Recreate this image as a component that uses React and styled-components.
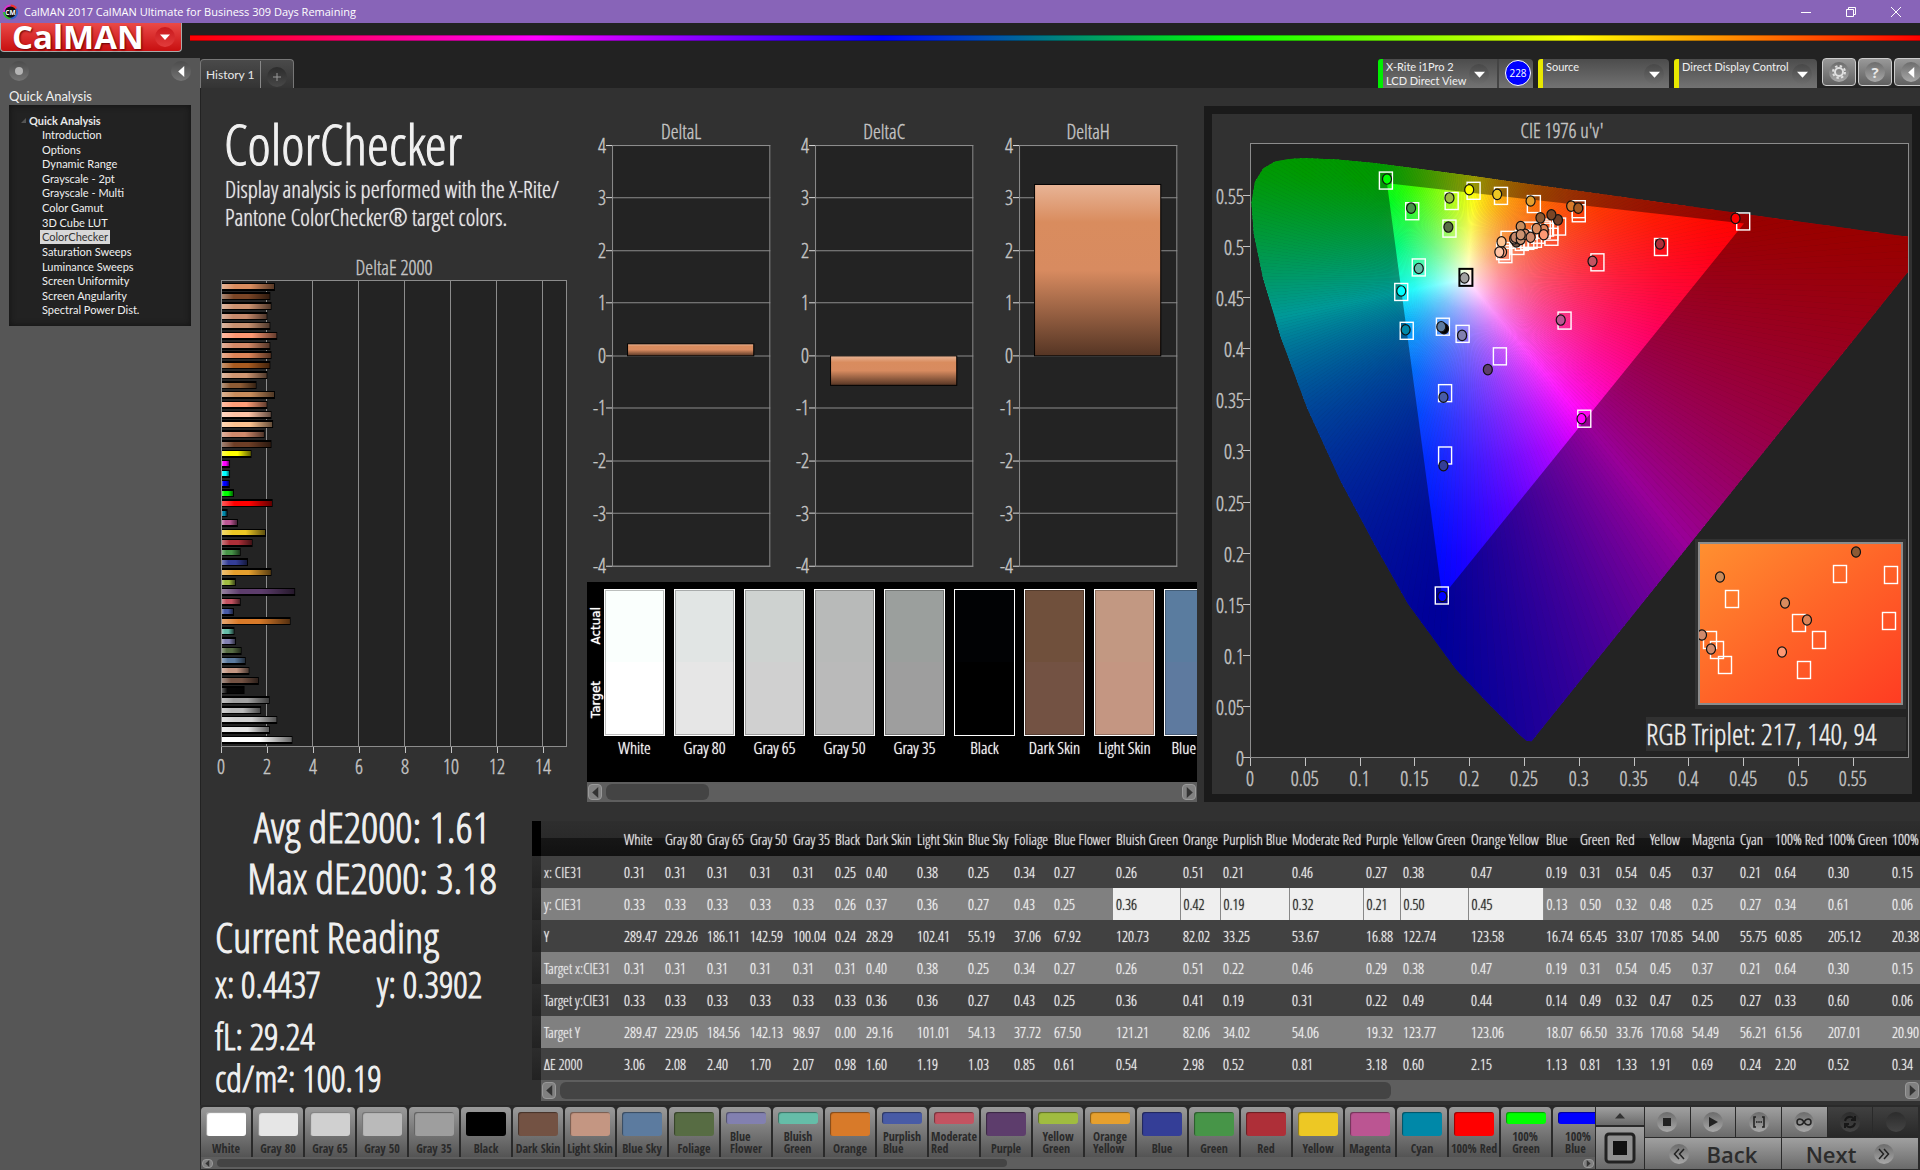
import React from 'react';
import styled, { createGlobalStyle } from 'styled-components';

const narrow = "'Open Sans Condensed Light', 'Open Sans Condensed', sans-serif";
const regular = "'Open Sans', 'Noto Sans', sans-serif";
const small = "Lato, 'Open Sans', sans-serif";

const GlobalStyle = createGlobalStyle`
* { box-sizing: border-box; }
body {
  margin: 0;
  background: #222;
  color: #e8e8e8;
  font-family: ${narrow};
  text-shadow: 0 0 1px currentColor;
  overflow: hidden;
}
button, select { font: inherit; color: inherit; text-shadow: inherit; }
button { cursor: pointer; padding: 0; border: 0; }
svg text {
  font-family: ${narrow};
  font-size: 20px;
  fill: #c4c4c4;
  stroke: #c4c4c4;
  stroke-width: 0.4px;
  text-shadow: none;
}
`;

const Page = styled.div`
display: flex;
flex-direction: column;
height: 100vh;
`;

/* ---------- title bar ---------- */

const TitleBar = styled.div`
display: flex;
align-items: center;
flex: none;
height: 23px;
padding: 0 2px 0 3px;
background: #8864b8;
color: #fff;
font-family: ${regular};
font-size: 11px;
text-shadow: none;
gap: 6px;
`;

const Spacer = styled.div`
flex: 1;
`;

const WindowButtons = styled.div`
display: flex;
`;

const WindowButton = styled.button`
display: flex;
align-items: center;
justify-content: center;
width: 45px;
height: 20px;
background: none;
color: #fff;
`;

/* ---------- logo row ---------- */

const LogoRow = styled.div`
display: flex;
flex: none;
height: 35px;
gap: 8px;
`;

const LogoButton = styled.button`
display: flex;
align-items: center;
justify-content: space-between;
width: 182px;
height: 29px;
padding: 0 6px 0 11px;
background: linear-gradient(#ea4a48, #c80f10);
border: 1px solid #aaa;
border-top: 0;
border-radius: 0 0 4px 4px;
color: #fff;
font-family: ${regular};
font-weight: 700;
font-size: 33px;
line-height: 26px;
text-shadow: 1px 1px 2px #600;
`;

const LogoDisc = styled.span`
display: flex;
align-items: center;
justify-content: center;
width: 20px;
height: 20px;
border-radius: 50%;
background: linear-gradient(#c8181c, #e23c3c);
`;

const Rainbow = styled.div`
flex: 1;
height: 6px;
margin-top: 12px;
border: 1px solid rgba(0, 0, 0, 0.3);
border-width: 1px 0;
background: linear-gradient(90deg, #f00, #f0f 20%, #00f 40%, #0f0 60%, #ff0 80%, #f00);
`;

/* ---------- frame ---------- */

const Frame = styled.div`
display: flex;
flex: 1;
min-height: 0;
`;

const Sidebar = styled.aside`
flex: none;
width: 200px;
padding: 3px 9px 0;
background: #565656;
font-family: ${small};
text-shadow: none;
`;

const SidebarTop = styled.div`
display: flex;
justify-content: space-between;
height: 27px;
`;

const RoundButton = styled.button`
display: flex;
align-items: center;
justify-content: center;
flex: none;
width: 20px;
height: 20px;
border-radius: 50%;
background: ${props => props.$bg || 'linear-gradient(#4c4c4c, #747474)'};
color: #fff;
`;

const SidebarTitle = styled.div`
margin-bottom: 1px;
font-size: 13px;
line-height: 16px;
color: #f0f0f0;
`;

const Tree = styled.div`
height: 221px;
padding: 7px 0 0 12px;
background: #222;
box-shadow: inset 0 0 6px #111;
font-size: 11px;
`;

const TreeRoot = styled.div`
display: flex;
align-items: center;
gap: 3px;
height: 16px;
font-weight: 700;
`;

const TreeList = styled.ul`
display: grid;
grid-auto-rows: 1fr;
height: 190px;
margin: 0;
padding: 0 0 0 19px;
line-height: 14px;
list-style: none;
`;

const TreeLink = styled.a`
display: inline-block;
padding: 0 2px;
color: ${props => (props.$active ? '#333' : '#f0f0f0')};
background: ${props => (props.$active ? '#d8d8d8' : 'none')};
text-decoration: none;
`;

const Main = styled.main`
display: flex;
flex-direction: column;
flex: 1;
min-width: 0;
overflow: hidden;
`;

const TabRow = styled.div`
display: flex;
align-items: flex-start;
flex: none;
height: 30px;
margin-right: -10px;
background: #222;
font-family: ${small};
text-shadow: none;
`;

const Tab = styled.div`
display: flex;
align-items: center;
height: 30px;
margin-top: 1px;
border: 1px solid #777;
border-bottom: 0;
border-radius: 4px 4px 0 0;
background: linear-gradient(#4a4a4a, #333);
`;

const TabButton = styled.button`
height: 28px;
padding: 0 5px;
border-right: 1px solid #888;
background: none;
font-size: 12px;
`;

const AddTab = styled.div`
display: flex;
padding: 4px 6px 0;
`;

const Device = styled.div`
display: flex;
height: 30px;
margin: 1px 5px 0 0;
border-left: 5px solid ${props => props.$mark};
border-radius: 3px 4px 0 0;
background: linear-gradient(#4c4c4c, #747474);
color: #f0f0f0;
font-size: 11px;
`;

const DeviceButton = styled.button`
display: flex;
justify-content: space-between;
align-items: center;
width: 116px;
padding: 0 8px 0 3px;
background: none;
border-right: 2px solid #444;
text-align: left;
line-height: 14px;
white-space: nowrap;
`;

const DeviceSelect = styled.select`
appearance: none;
width: ${props => props.$wide}px;
height: 16px;
padding: 0 0 0 3px;
border: 0;
background: none;
line-height: 16px;
`;

const DeviceArrow = styled.div`
display: flex;
align-items: center;
padding-right: 5px;
`;

const Meter = styled.div`
display: flex;
align-items: center;
justify-content: center;
width: 26px;
height: 26px;
margin: 1px 2px 0 6px;
border: 1px solid #fff;
border-radius: 50%;
background: #00f;
font-family: ${regular};
font-size: 10px;
color: #fff;
`;

const ToolButton = styled.button`
display: flex;
align-items: center;
justify-content: center;
width: 34px;
height: 28px;
margin-right: 2px;
border: 1px solid #ccc;
border-radius: 4px;
background: linear-gradient(#999, #606060);
font-family: ${regular};
font-weight: 700;
font-size: 15px;
`;

/* ---------- workspace ---------- */

const Workspace = styled.div`
display: flex;
flex-direction: column;
flex: 1;
min-height: 0;
background: #313131;
border-left: 1px solid #222;
`;

const Charts = styled.div`
display: grid;
grid-template-columns: minmax(0, 386fr) minmax(0, 617fr) minmax(0, 716fr);
flex: none;
min-height: 715px;
`;

const Intro = styled.section`
padding-top: 25px;
`;

const Heading = styled.h1`
margin: 0 0 2px 23px;
font-weight: 400;
font-size: 56px;
line-height: 60px;
color: #f0f0f0;
text-shadow: none;
-webkit-text-stroke: 1px;
`;

const Lead = styled.p`
margin: 0 0 19px 24px;
font-size: 23px;
line-height: 28px;
white-space: nowrap;
`;

const Chart = styled.svg`
display: block;
width: 100%;
height: auto;
`;

const Middle = styled.section`
padding: 30px 7px 0 0;
`;

const Deltas = styled.div`
display: grid;
grid-template-columns: repeat(3, minmax(0, 1fr));
height: 464px;
`;

const SwatchPanel = styled.div`
display: flex;
height: 200px;
padding-top: 7px;
background: #000;
overflow: hidden;
`;

const SwatchSide = styled.div`
display: flex;
flex-direction: column-reverse;
justify-content: space-around;
align-items: center;
flex: none;
width: 17px;
height: 147px;
font-family: 'DejaVu Sans', sans-serif;
font-size: 12px;
color: #fff;
span {
  writing-mode: vertical-rl;
  rotate: 180deg;
}
`;

const Swatch = styled.div`
flex: none;
width: 61px;
margin-right: 9px;
text-align: center;
font-size: 17px;
line-height: 24px;
color: #fff;
white-space: nowrap;
`;

const SwatchColor = styled.div`
height: 147px;
border: 1px solid #fff;
box-shadow: inset 0 0 0 1px rgba(0, 0, 0, 0.25);
background: linear-gradient(${props => props.$actual} 50%, ${props => props.$target} 50%);
`;

const Scroll = styled.div`
display: flex;
align-items: center;
gap: 4px;
flex: none;
height: ${props => props.$size}px;
padding: 1px;
background: #5e5e5e;
`;

const ScrollButton = styled.button`
display: flex;
align-items: center;
justify-content: center;
flex: none;
width: ${props => (props.$small ? 11 : 14)}px;
height: 90%;
border: 1px solid #999;
border-radius: 4px;
background: #808080;
`;

const ScrollTrack = styled.div`
flex: 1;
height: 86%;
`;

const ScrollThumb = styled.div`
width: ${props => props.$portion};
height: 100%;
border-radius: 6px;
background: #444;
`;

const CiePanel = styled.section`
align-self: start;
margin-top: 18px;
border: 8px solid #1a1a1a;
background: #313131;
`;

const Lower = styled.div`
display: flex;
flex: 1;
min-height: 0;
`;

const Stats = styled.section`
flex: none;
width: 331px;
margin-top: -2px;
padding-left: 14px;
font-size: 36px;
line-height: 42px;
color: #f0f0f0;
text-shadow: none;
-webkit-text-stroke: 1px;
white-space: nowrap;
`;

const BigStat = styled.div`
margin-right: 3px;
text-align: center;
font-size: 43px;
line-height: 51px;
`;

const StatHeading = styled.div`
margin-top: 8px;
font-size: 43px;
line-height: 51px;
`;

const StatPair = styled.div`
display: grid;
grid-template-columns: 162px 1fr;
line-height: 46px;
margin-bottom: 8px;
`;

const Results = styled.section`
flex: 1;
min-width: 0;
padding-top: 18px;
`;

const TableClip = styled.div`
overflow: hidden;
`;

const ScrollIndent = styled.div`
margin-left: 9px;
`;

const Table = styled.table`
table-layout: fixed;
width: 1439px;
border-collapse: collapse;
font-size: 15px;
white-space: nowrap;
th, td {
  padding: 0 0 0 3px;
  font-weight: 400;
  text-align: left;
}
thead tr {
  height: 35px;
  background: linear-gradient(#2e2e2e, #2a2a2a 50%, #161616 50%, #111);
}
tbody tr {
  height: 32px;
  background: #414141;
}
tbody tr:nth-child(even) {
  background: #808080;
}
thead td:first-child {
  background: #000;
}
tbody td:first-child {
  background: linear-gradient(#2c2c2c, #222);
}
`;

const Cell = styled.td`
color: ${props => (props.$on ? '#222' : '#f0f0f0')};
background: ${props => (props.$on ? '#efefef' : 'none')};
border-right: ${props => (props.$on ? '1px solid #888' : '0')};
`;

/* ---------- bottom bar ---------- */

const BottomBar = styled.div`
display: flex;
flex: none;
height: 65px;
padding: 2px 2px 1px 1px;
gap: 1px;
background: #2a2a2a;
text-shadow: none;
`;

const Patches = styled.div`
flex: 1;
min-width: 0;
`;

const PatchRow = styled.div`
display: flex;
gap: 2px;
height: 50px;
overflow: hidden;
`;

const Patch = styled.button`
display: flex;
flex-direction: column;
justify-content: space-between;
align-items: center;
flex: none;
width: 50px;
height: 50px;
padding: 5px 0 2px;
border-radius: 4px 4px 0 0;
background: linear-gradient(#9a9a9a, #545454);
color: #2a2a2a;
font-family: 'Open Sans Condensed', sans-serif;
font-weight: 700;
font-size: 12px;
line-height: 12px;
text-align: left;
white-space: pre;
`;

const PatchColor = styled.span`
width: 40px;
height: ${props => (props.$short ? 12 : 24)}px;
border-radius: 3px;
box-shadow: inset 1px 1px 1px rgba(0, 0, 0, 0.4);
background: ${props => props.$color};
`;

const Stack = styled.div`
display: grid;
grid-template-rows: 18px 1fr;
gap: 2px;
width: 48px;
`;

const Controls = styled.div`
display: grid;
grid-template-rows: 30px 1fr;
gap: 1px;
width: 273px;
`;

const ControlRow = styled.div`
display: flex;
gap: 1px;
`;

const Control = styled.button`
display: flex;
align-items: center;
justify-content: center;
gap: 18px;
flex: 1;
background: ${props => (props.$dark ? 'linear-gradient(#404040, #282828)' : 'linear-gradient(#a0a0a0, #6a6a6a)')};
color: #2c2c2c;
font-family: ${regular};
font-weight: 600;
font-size: 22px;
line-height: 28px;
`;

/* ---------- data ---------- */

const sections = ['Introduction', 'Options', 'Dynamic Range', 'Grayscale - 2pt', 'Grayscale - Multi',
  'Color Gamut', '3D Cube LUT', 'ColorChecker', 'Saturation Sweeps', 'Luminance Sweeps',
  'Screen Uniformity', 'Screen Angularity', 'Spectral Power Dist.'];

const deltaE = [
  [2.3, '#d98c5e'], [2.1, '#7a4526'], [2.15, '#cd9270'], [1.97, '#c88a6c'], [2.1, '#c79070'],
  [2.4, '#ff9873'], [2.1, '#d48866'], [2.15, '#dd8458'], [2.1, '#a85a20'], [1.97, '#d09672'],
  [1.5, '#8c5a34'], [2.3, '#c88c5c'], [1.97, '#ff9e78'], [2.15, '#ffc4a6'], [2.22, '#ffc491'],
  [1.85, '#d08a6c'], [2.15, '#6e3e26'], [1.28, '#ffff00'], [0.35, '#ff00ff'], [0.35, '#00ffff'],
  [0.34, '#0000ff'], [0.52, '#00ff00'], [2.2, '#ff0000'], [0.24, '#0088a8'], [0.69, '#bb5592'],
  [1.91, '#edc824'], [1.33, '#ae2f38'], [0.81, '#479548'], [1.13, '#343e97'], [2.15, '#e6a02e'],
  [0.6, '#a0bc40'], [3.18, '#5d3d6c'], [0.81, '#c35361'], [0.52, '#485ba6'], [2.98, '#d87a29'],
  [0.54, '#65bda8'], [0.61, '#8280b0'], [0.85, '#576c43'], [1.03, '#5c7b9f'], [1.19, '#c49682'],
  [1.6, '#735243'], [0.98, '#050505'], [2.07, '#a0a0a0'], [1.7, '#bababa'], [2.4, '#d0d0d0'],
  [2.08, '#e6e6e6'], [3.06, '#ffffff'],
];

const swatches = [
  ['White', '#fafffd', '#ffffff'], ['Gray 80', '#e1e5e4', '#e6e6e6'], ['Gray 65', '#ced2d0', '#d0d0d0'],
  ['Gray 50', '#b8bab9', '#bababa'], ['Gray 35', '#9b9f9d', '#9e9e9e'], ['Black', '#010204', '#000000'],
  ['Dark Skin', '#70503c', '#735243'], ['Light Skin', '#c29882', '#c49682'], ['Blue Sky', '#5a7c9f', '#5e7a9f'],
];

const patches = [
  ['White', '#ffffff'], ['Gray 80', '#e6e6e6'], ['Gray 65', '#d0d0d0'], ['Gray 50', '#bababa'],
  ['Gray 35', '#9e9e9e'], ['Black', '#000000'], ['Dark Skin', '#735243'], ['Light Skin', '#c49682'],
  ['Blue Sky', '#5c7b9f'], ['Foliage', '#576c43'], ['Blue\nFlower', '#8280b0'], ['Bluish\nGreen', '#65bda8'],
  ['Orange', '#d87a29'], ['Purplish\nBlue', '#485ba6'], ['Moderate\nRed', '#c35361'], ['Purple', '#5d3d6c'],
  ['Yellow\nGreen', '#a0bc40'], ['Orange\nYellow', '#e6a02e'], ['Blue', '#343e97'], ['Green', '#479548'],
  ['Red', '#ae2f38'], ['Yellow', '#edc824'], ['Magenta', '#bb5592'], ['Cyan', '#0088a8'],
  ['100% Red', '#ff0000'], ['100%\nGreen', '#00ff00'], ['100%\nBlue', '#0000ff'],
];

const columns = [
  ['White', 41], ['Gray 80', 42], ['Gray 65', 43], ['Gray 50', 43], ['Gray 35', 42], ['Black', 31],
  ['Dark Skin', 51], ['Light Skin', 51], ['Blue Sky', 46], ['Foliage', 40], ['Blue Flower', 62],
  ['Bluish Green', 67], ['Orange', 40], ['Purplish Blue', 69], ['Moderate Red', 74], ['Purple', 37],
  ['Yellow Green', 68], ['Orange Yellow', 75], ['Blue', 34], ['Green', 36], ['Red', 34], ['Yellow', 42],
  ['Magenta', 48], ['Cyan', 35], ['100% Red', 53], ['100% Green', 64], ['100% Blue', 82],
];

const rows = [
  ['x: CIE31', '0.31 0.31 0.31 0.31 0.31 0.25 0.40 0.38 0.25 0.34 0.27 0.26 0.51 0.21 0.46 0.27 0.38 0.47 0.19 0.31 0.54 0.45 0.37 0.21 0.64 0.30 0.15'],
  ['y: CIE31', '0.33 0.33 0.33 0.33 0.33 0.26 0.37 0.36 0.27 0.43 0.25 0.36 0.42 0.19 0.32 0.21 0.50 0.45 0.13 0.50 0.32 0.48 0.25 0.27 0.34 0.61 0.06'],
  ['Y', '289.47 229.26 186.11 142.59 100.04 0.24 28.29 102.41 55.19 37.06 67.92 120.73 82.02 33.25 53.67 16.88 122.74 123.58 16.74 65.45 33.07 170.85 54.00 55.75 60.85 205.12 20.38'],
  ['Target x:CIE31', '0.31 0.31 0.31 0.31 0.31 0.31 0.40 0.38 0.25 0.34 0.27 0.26 0.51 0.22 0.46 0.29 0.38 0.47 0.19 0.31 0.54 0.45 0.37 0.21 0.64 0.30 0.15'],
  ['Target y:CIE31', '0.33 0.33 0.33 0.33 0.33 0.33 0.36 0.36 0.27 0.43 0.25 0.36 0.41 0.19 0.31 0.22 0.49 0.44 0.14 0.49 0.32 0.47 0.25 0.27 0.33 0.60 0.06'],
  ['Target Y', '289.47 229.05 184.56 142.13 98.97 0.00 29.16 101.01 54.13 37.72 67.50 121.21 82.06 34.02 54.06 19.32 123.77 123.06 18.07 66.50 33.76 170.68 54.49 56.21 61.56 207.01 20.90'],
  ['ΔE 2000', '3.06 2.08 2.40 1.70 2.07 0.98 1.60 1.19 1.03 0.85 0.61 0.54 2.98 0.52 0.81 3.18 0.60 2.15 1.13 0.81 1.33 1.91 0.69 0.24 2.20 0.52 0.34'],
];

// spectral locus in u'v'
const locus = [[0.2569, 0.0165], [0.2522, 0.0169], [0.2461, 0.0226], [0.2347, 0.035], [0.2161, 0.0549],
  [0.1877, 0.0871], [0.1441, 0.151], [0.1147, 0.207], [0.0828, 0.2708], [0.0521, 0.3427], [0.0282, 0.4117], [0.0119, 0.4698],
  [0.0035, 0.5131], [0.0014, 0.5432], [0.0046, 0.5638], [0.0123, 0.577], [0.0231, 0.5837], [0.036, 0.5861],
  [0.0501, 0.5868], [0.0792, 0.5856], [0.1127, 0.5821], [0.1531, 0.5766], [0.2026, 0.5694],
  [0.2623, 0.5604], [0.3315, 0.5501], [0.4035, 0.5393], [0.4692, 0.5296], [0.5203, 0.5219],
  [0.583, 0.5125], [0.6234, 0.5065]];

const gamut = [[0.4507, 0.5229], [0.125, 0.5625], [0.1754, 0.1579]];
const white = [0.1978, 0.4683];

const targets = [
  [0.124, 0.565], [0.148, 0.535], [0.184, 0.545], [0.182, 0.518], [0.204, 0.555], [0.229, 0.55],
  [0.259, 0.542], [0.3, 0.537], [0.3, 0.533], [0.45, 0.525], [0.375, 0.5], [0.317, 0.485],
  [0.154, 0.48], [0.138, 0.456], [0.143, 0.418], [0.176, 0.422], [0.194, 0.415], [0.228, 0.393],
  [0.178, 0.357], [0.178, 0.296], [0.305, 0.332], [0.287, 0.428], [0.175, 0.159],
  [0.233, 0.493], [0.231, 0.496], [0.235, 0.507], [0.244, 0.501], [0.248, 0.505], [0.253, 0.506],
  [0.256, 0.507], [0.26, 0.508], [0.256, 0.516], [0.268, 0.517], [0.275, 0.51], [0.282, 0.52],
  [0.275, 0.515], [0.271, 0.519], [0.248, 0.508], [0.263, 0.512],
];

const readings = [
  [0.125, 0.5665, '#00ff00'], [0.147, 0.538, '#479548'], [0.182, 0.548, '#a0bc40'], [0.181, 0.5195, '#576c43'],
  [0.2, 0.556, '#ffff00'], [0.2255, 0.5515, '#edc824'], [0.256, 0.545, '#e6a02e'], [0.293, 0.54, '#d87a29'],
  [0.2995, 0.538, '#a85a20'], [0.443, 0.528, '#ff0000'], [0.374, 0.503, '#ae2f38'], [0.3125, 0.486, '#c35361'],
  [0.154, 0.479, '#65bda8'], [0.138, 0.457, '#00ffff'], [0.142, 0.419, '#0088a8'], [0.177, 0.42, '#000000'],
  [0.1745, 0.422, '#5c7b9f'], [0.1935, 0.4135, '#8280b0'], [0.217, 0.38, '#5d3d6c'], [0.1765, 0.353, '#485ba6'],
  [0.1765, 0.286, '#343e97'], [0.3025, 0.332, '#ff00ff'], [0.2835, 0.4285, '#bb5592'], [0.1755, 0.158, '#0000ff'],
  [0.281, 0.5265, '#6e3e26'], [0.275, 0.5315, '#7a4526'], [0.265, 0.5285, '#8c5a34'], [0.247, 0.52, '#c88c5c'],
  [0.268, 0.517, '#dd8458'], [0.2615, 0.518, '#d98c5e'], [0.268, 0.512, '#ff9873'], [0.2295, 0.505, '#ffc491'],
  [0.23, 0.495, '#ff9e78'], [0.2275, 0.495, '#ffc4a6'], [0.243, 0.505, '#735243'], [0.241, 0.508, '#c49682'],
  [0.242, 0.5095, '#c88a6c'], [0.247, 0.5075, '#c79070'], [0.251, 0.5125, '#d48866'], [0.247, 0.512, '#cd9270'],
  [0.256, 0.5095, '#d08a6c'],
];

const insetTargets = [[142, 32], [193, 33], [34, 57], [101, 81], [191, 79], [121, 98], [12, 98], [19, 108], [27, 123], [106, 128]];
const insetReadings = [[158, 10, '#8c5a34'], [22, 35, '#c88c5c'], [87, 61, '#d98c5e'], [109, 78, '#dd8458'],
  [84, 110, '#ff9873'], [4, 93, '#d08a6c'], [13, 107, '#d08a6c']];

/* ---------- CIE helpers ---------- */

const toX = u => 38 + u * 1096;
const toY = v => 644 - v * 1022;
const toPoint = ([u, v]) => `${toX(u)},${toY(v)}`;

const colorAt = (u, v) => {
  const X = (9 * u) / (4 * v);
  const Z = (12 - 3 * u - 20 * v) / (4 * v);
  const linear = [
    3.2406 * X - 1.5372 - 0.4986 * Z,
    -0.9689 * X + 1.8758 + 0.0415 * Z,
    0.0557 * X - 0.204 + 1.057 * Z,
  ].map(c => Math.max(0, c));
  const top = Math.max(...linear);
  return `rgb(${linear.map(c => Math.round(255 * c / top)).join(',')})`;
};

const rayCount = 360;
const reach = 0.6;
const stops = [0, 0.02, 0.05, 0.08, 0.12, 0.17, 0.23, 0.3, 0.38, 0.45, 0.55, 0.7, 0.85, 1];
const rays = Array.from({ length: rayCount }, (_, i) => {
  const step = (2 * Math.PI) / rayCount;
  const at = (angle, r) => [white[0] + Math.cos(angle) * r, white[1] + Math.sin(angle) * r];
  const mid = (i + 0.5) * step;
  return {
    id: `ray${i}`,
    end: at(mid, reach),
    points: [white, at(i * step, reach * 1.1), at((i + 1) * step, reach * 1.1)].map(toPoint).join(' '),
    stops: stops.map((t) => {
      const [u, v] = at(mid, reach * t);
      return [t, colorAt(u, Math.max(v, 0.008))];
    }),
  };
});

/* ---------- components ---------- */

const Triangle = ({ dir = 'down', size = 10, color = '#fff' }) => {
  const turn = { down: 0, left: 90, up: 180, right: 270 }[dir];
  return (
    <svg width={size} height={size} viewBox="0 0 10 10" aria-hidden="true">
      <path d="M0 2.5h10L5 8z" fill={color} transform={`rotate(${turn} 5 5)`} />
    </svg>
  );
};

const Knob = styled.span`
display: flex;
align-items: center;
justify-content: center;
flex: none;
width: 20px;
height: 20px;
border-radius: 50%;
background: linear-gradient(#484848, #6c6c6c);
`;

const Scrollbar = ({ size, portion, label }) => (
  <Scroll $size={size}>
    <ScrollButton $small={size < 15} aria-label={`${label} left`}><Triangle dir="left" size={size < 15 ? 7 : 11} color="#333" /></ScrollButton>
    <ScrollTrack><ScrollThumb $portion={portion} /></ScrollTrack>
    <ScrollButton $small={size < 15} aria-label={`${label} right`}><Triangle dir="right" size={size < 15 ? 7 : 11} color="#333" /></ScrollButton>
  </Scroll>
);

const DeltaEChart = () => (
  <Chart viewBox="0 0 386 540" role="img" aria-label="DeltaE 2000">
    <defs>
      <linearGradient id="shade">
        <stop offset="0" stopColor="#fff" stopOpacity="0.35" />
        <stop offset="0.25" stopColor="#fff" stopOpacity="0" />
        <stop offset="0.55" stopColor="#000" stopOpacity="0" />
        <stop offset="1" stopColor="#000" stopOpacity="0.6" />
      </linearGradient>
    </defs>
    <text x="193" y="25" textAnchor="middle">DeltaE 2000</text>
    <rect x="20" y="31" width="345" height="465" fill="#232323" />
    {[2, 4, 6, 8, 10, 12, 14].map(n => (
      <path key={n} d={`M${19.5 + n * 23} 31v465`} stroke="#8c8c8c" />
    ))}
    {[0, 2, 4, 6, 8, 10, 12, 14].map(n => (
      <g key={n}>
        <path d={`M${20.5 + n * 23} 496v7`} stroke="#c4c4c4" />
        <text x={20 + n * 23} y="524" textAnchor="middle">{n}</text>
      </g>
    ))}
    {deltaE.map(([value, color], i) => (
      <g key={i}>
        <rect x="20" y={Math.round(32.5 + i * 9.85)} width={value * 23 + 1} height="8" fill="#000" />
        <rect x="21" y={Math.round(34 + i * 9.85)} width={value * 23 - 1} height="5" fill={color} />
        <rect x="21" y={Math.round(34 + i * 9.85)} width={value * 23 - 1} height="5" fill="url(#shade)" />
      </g>
    ))}
    <rect x="20.5" y="30.5" width="345" height="466" fill="none" stroke="#8c8c8c" />
  </Chart>
);

const DeltaChart = ({ name, value }) => {
  const zero = 237.5;
  const height = Math.abs(value) * 52.5;
  return (
    <Chart viewBox="0 0 203 464" role="img" aria-label={name}>
      <defs>
        <linearGradient id="bar" x2="0" y2="1">
          <stop offset="0" stopColor="#e8b496" />
          <stop offset="0.22" stopColor="#d98c5e" />
          <stop offset="0.5" stopColor="#d88b60" />
          <stop offset="1" stopColor="#553524" />
        </linearGradient>
      </defs>
      <text x="94" y="21" textAnchor="middle">{name}</text>
      <rect x="25.5" y="27.5" width="157" height="420" fill="#232323" stroke="#8c8c8c" />
      {[4, 3, 2, 1, 0, -1, -2, -3, -4].map(n => (
        <g key={n}>
          <path d={`M25 ${Math.round(zero - n * 52.5) - 0.5}h158`} stroke="#8c8c8c" />
          <path d={`M19 ${Math.round(zero - n * 52.5) - 0.5}h6`} stroke="#ddd" />
          <text x="19" y={zero + 7 - n * 52.5} textAnchor="end">{n}</text>
        </g>
      ))}
      <rect
        x="40.5"
        y={value > 0 ? zero - height : zero}
        width="126"
        height={height}
        fill="url(#bar)"
        stroke="#000"
      />
    </Chart>
  );
};

const Target = ({ x, y, dark }) => (
  <rect x={x - 6.5} y={y - 8.5} width="13" height="17" fill="none" stroke={dark ? '#000' : '#fff'} strokeWidth={dark ? 2 : 1.4} />
);

const Reading = ({ x, y, color }) => (
  <ellipse cx={x} cy={y} rx="4.5" ry="5.2" fill={color} stroke="#111" strokeWidth="1.2" />
);

const TripletText = styled.text`
&& {
  font-size: 29px;
  fill: #f0f0f0;
  stroke: #f0f0f0;
}
`;

const IconText = styled.text`
&& {
  font-family: ${regular};
  font-size: 7px;
  font-weight: 700;
  fill: #fff;
  stroke: none;
}
`;

const CieChart = () => (
  <Chart viewBox="0 0 700 680" role="img" aria-label="CIE 1976 u'v'">
    <defs>
      <clipPath id="plot"><rect x="38" y="30" width="658" height="614" /></clipPath>
      <clipPath id="locus"><polygon points={locus.map(toPoint).join(' ')} /></clipPath>
      {rays.map(ray => (
        <linearGradient
          key={ray.id}
          id={ray.id}
          gradientUnits="userSpaceOnUse"
          x1={toX(white[0])}
          y1={toY(white[1])}
          x2={toX(ray.end[0])}
          y2={toY(ray.end[1])}
        >
          {ray.stops.map(([t, color]) => <stop key={t} offset={t} stopColor={color} />)}
        </linearGradient>
      ))}
      <linearGradient id="inset" x2="1" y2="1">
        <stop offset="0" stopColor="#ff9030" />
        <stop offset="0.5" stopColor="#ff6428" />
        <stop offset="1" stopColor="#ff3c22" />
      </linearGradient>
      <clipPath id="insetClip"><rect x="487" y="429" width="203" height="161" /></clipPath>
    </defs>
    <text x="350" y="24" textAnchor="middle">CIE 1976 u&#39;v&#39;</text>
    <rect x="38" y="30" width="658" height="614" fill="#232323" />
    <g clipPath="url(#plot)">
      <g clipPath="url(#locus)">
        {rays.map(ray => (
          <polygon key={ray.id} points={ray.points} fill={`url(#${ray.id})`} stroke={`url(#${ray.id})`} strokeWidth="0.7" />
        ))}
        <path d={`M0 0H760V700H0ZM${gamut.map(toPoint).join('L')}Z`} fillRule="evenodd" opacity="0.4" />
      </g>
      {targets.map(([u, v], i) => <Target key={i} x={toX(u)} y={toY(v)} />)}
      <Target x={toX(0.197)} y={toY(0.4703)} dark />
      {readings.map(([u, v, color], i) => <Reading key={i} x={toX(u)} y={toY(v)} color={color} />)}
      <Reading x={toX(0.1957)} y={toY(0.4697)} color="#a0a0a0" />
    </g>
    <rect x="38.5" y="29.5" width="658" height="614" fill="none" stroke="#8c8c8c" />
    {[0, 0.05, 0.1, 0.15, 0.2, 0.25, 0.3, 0.35, 0.4, 0.45, 0.5, 0.55].map(n => (
      <g key={n}>
        <path d={`M${Math.round(toX(n)) + 0.5} 644v8M31 ${Math.round(toY(n)) - 0.5}h7`} stroke="#c4c4c4" />
        <text x={toX(n)} y="672" textAnchor="middle">{n}</text>
        <text x="32" y={toY(n) + 8} textAnchor="end">{n}</text>
      </g>
    ))}
    <rect x="483" y="425" width="211" height="170" fill="#313131" />
    <rect x="487" y="429" width="203" height="161" fill="url(#inset)" stroke="#8c8c8c" strokeWidth="2" />
    <g clipPath="url(#insetClip)">
      <g transform="translate(486 428)">
        {insetTargets.map(([x, y], i) => <Target key={i} x={x} y={y} />)}
        {insetReadings.map(([x, y, color], i) => <Reading key={i} x={x} y={y} color={color} />)}
      </g>
    </g>
    <rect x="434" y="603" width="260" height="34" fill="#313131" />
    <TripletText x="434" y="631">RGB Triplet: 217, 140, 94</TripletText>
  </Chart>
);

const DataTable = () => (
  <Table>
    <colgroup>
      <col style={{ width: 9 }} />
      <col style={{ width: 80 }} />
      {columns.map(([name, width]) => <col key={name} style={{ width }} />)}
    </colgroup>
    <thead>
      <tr>
        <td />
        <td />
        {columns.map(([name]) => <th key={name} scope="col">{name}</th>)}
      </tr>
    </thead>
    <tbody>
      {rows.map(([label, values], r) => (
        <tr key={label}>
          <td />
          <th scope="row">{label}</th>
          {values.split(' ').map((value, c) => (
            <Cell key={c} $on={r === 1 && c > 10 && c < 18}>{value}</Cell>
          ))}
        </tr>
      ))}
    </tbody>
  </Table>
);

const Disc = styled.span`
display: flex;
align-items: center;
justify-content: center;
flex: none;
width: 20px;
height: 20px;
border-radius: 50%;
background: ${props => (props.$dark ? 'linear-gradient(#2c2c2c, #444)' : 'linear-gradient(#6c6c6c, #a8a8a8)')};
`;

const icons = [
  ['Stop', <rect x="5" y="5" width="8" height="8" fill="#222" />],
  ['Play', <path d="M5 4l9 5-9 5z" fill="#222" />],
  ['Read series', <path d="M6 4H4v10h2M12 4h2v10h-2M6 9h1.600M8.200 9h1.600M10.400 9h1.600" fill="none" stroke="#222" strokeWidth="1.6" />],
  ['Continuous', <path d="M9 9C7.500 6.500 6.500 6 5 6a3 3 0 0 0 0 6c1.500 0 2.500-.5 4-3s2.500-3 4-3a3 3 0 0 1 0 6c-1.500 0-2.500-.5-4-3z" fill="none" stroke="#222" strokeWidth="1.5" />],
  ['Refresh', <path d="M4 8a5 5 0 0 1 9-2M14 3v4h-4M14 10a5 5 0 0 1-9 2M4 15v-4h4" fill="none" stroke="#181818" strokeWidth="2" />, true],
  ['Record', null, true],
];

const App = () => (
  <Page>
    <GlobalStyle />
    <TitleBar>
      <svg width="15" height="16" viewBox="0 0 16 16" aria-hidden="true">
        <path d="M8 8L8 0A8 8 0 0 1 15 4z" fill="#e33" />
        <path d="M8 8L15 4A8 8 0 0 1 8 16z" fill="#36c" />
        <path d="M8 8L8 16A8 8 0 0 1 0 8z" fill="#3b3" />
        <path d="M8 8L0 8A8 8 0 0 1 8 0z" fill="#d3c" />
        <circle cx="8" cy="8" r="6" fill="#111" />
        <IconText x="8" y="11" textAnchor="middle">CM</IconText>
      </svg>
      <span>CalMAN 2017 CalMAN Ultimate for Business 309 Days Remaining</span>
      <Spacer />
      <WindowButtons>
        <WindowButton aria-label="Minimize">
          <svg width="10" height="10" viewBox="0 0 10 10"><path d="M0 5.500h10" stroke="#fff" /></svg>
        </WindowButton>
        <WindowButton aria-label="Restore">
          <svg width="10" height="10" viewBox="0 0 10 10" fill="none" stroke="#fff"><path d="M.5 2.500h7v7h-7zM2.500 2.500v-2h7v7h-2" /></svg>
        </WindowButton>
        <WindowButton aria-label="Close">
          <svg width="10" height="10" viewBox="0 0 10 10" stroke="#fff"><path d="M0 0l10 10M10 0L0 10" /></svg>
        </WindowButton>
      </WindowButtons>
    </TitleBar>
    <LogoRow>
      <LogoButton>
        CalMAN
        <LogoDisc><Triangle /></LogoDisc>
      </LogoButton>
      <Rainbow />
    </LogoRow>
    <Frame>
      <Sidebar>
        <SidebarTop>
          <RoundButton aria-label="Status">
            <svg width="8" height="8" viewBox="0 0 8 8"><circle cx="4" cy="4" r="4" fill="#b4b4b4" /></svg>
          </RoundButton>
          <RoundButton aria-label="Collapse"><Triangle dir="left" size={11} /></RoundButton>
        </SidebarTop>
        <SidebarTitle>Quick Analysis</SidebarTitle>
        <Tree>
          <TreeRoot>
            <svg width="5" height="5" viewBox="0 0 5 5" aria-hidden="true"><path d="M5 0v5H0z" fill="#555" /></svg>
            Quick Analysis
          </TreeRoot>
          <TreeList>
            {sections.map(name => (
              <li key={name}><TreeLink href="#" $active={name === 'ColorChecker'}>{name}</TreeLink></li>
            ))}
          </TreeList>
        </Tree>
      </Sidebar>
      <Main>
        <TabRow>
          <Tab>
            <TabButton>History 1</TabButton>
            <AddTab><RoundButton $bg="linear-gradient(#2c2c2c, #484848)" aria-label="Add tab">
              <svg width="8" height="8" viewBox="0 0 8 8"><path d="M4 0v8M0 4h8" stroke="#999" /></svg>
            </RoundButton></AddTab>
          </Tab>
          <Spacer />
          <Device $mark="#0e0">
            <DeviceButton>
              <span>X-Rite i1Pro 2<br />LCD Direct View</span>
              <Knob><Triangle size={11} /></Knob>
            </DeviceButton>
            <Meter>228</Meter>
          </Device>
          <Device $mark="#e8e800">
            <DeviceSelect $wide={101} aria-label="Source"><option>Source</option></DeviceSelect>
            <DeviceArrow><Knob><Triangle size={11} /></Knob></DeviceArrow>
          </Device>
          <Device $mark="#e8e800">
            <DeviceSelect $wide={113} aria-label="Display control"><option>Direct Display Control</option></DeviceSelect>
            <DeviceArrow><Knob><Triangle size={11} /></Knob></DeviceArrow>
          </Device>
          <ToolButton aria-label="Settings">
            <Disc><svg width="16" height="16" viewBox="0 0 16 16" fill="none" stroke="#e0e0e0">
              <circle cx="8" cy="8" r="4" strokeWidth="2" />
              <circle cx="8" cy="8" r="6" strokeWidth="2" strokeDasharray="2.400 2.312" />
            </svg></Disc>
          </ToolButton>
          <ToolButton aria-label="Help"><Disc>?</Disc></ToolButton>
          <ToolButton aria-label="Collapse"><Disc><Triangle dir="left" size={11} /></Disc></ToolButton>
        </TabRow>
        <Workspace>
          <Charts>
            <Intro>
              <Heading>ColorChecker</Heading>
              <Lead>Display analysis is performed with the X-Rite/<br />Pantone ColorChecker® target colors.</Lead>
              <DeltaEChart />
            </Intro>
            <Middle>
              <Deltas>
                <DeltaChart name="DeltaL" value={0.23} />
                <DeltaChart name="DeltaC" value={-0.56} />
                <DeltaChart name="DeltaH" value={3.26} />
              </Deltas>
              <SwatchPanel>
                <SwatchSide><span>Target</span><span>Actual</span></SwatchSide>
                {swatches.map(([name, actual, target]) => (
                  <Swatch key={name}>
                    <SwatchColor $actual={actual} $target={target} />
                    {name}
                  </Swatch>
                ))}
              </SwatchPanel>
              <Scrollbar size={20} portion="18%" label="Swatches" />
            </Middle>
            <CiePanel><CieChart /></CiePanel>
          </Charts>
          <Lower>
            <Stats>
              <BigStat>Avg dE2000: 1.61</BigStat>
              <BigStat>Max dE2000: 3.18</BigStat>
              <StatHeading>Current Reading</StatHeading>
              <StatPair><span>x: 0.4437</span><span>y: 0.3902</span></StatPair>
              <div>fL: 29.24</div>
              <div>cd/m²: 100.19</div>
            </Stats>
            <Results>
              <TableClip><DataTable /></TableClip>
              <ScrollIndent><Scrollbar size={21} portion="62%" label="Results" /></ScrollIndent>
            </Results>
          </Lower>
        </Workspace>
        <BottomBar>
          <Patches>
            <PatchRow>
              {patches.map(([name, color]) => (
                <Patch key={name}>
                  <PatchColor $color={color} $short={name.includes('\n')} />
                  {name}
                </Patch>
              ))}
            </PatchRow>
            <Scrollbar size={12} portion="58%" label="Patches" />
          </Patches>
          <Stack>
            <Control aria-label="Expand"><Triangle dir="up" color="#333" /></Control>
            <Control aria-label="Stop all">
              <svg width="32" height="32" viewBox="0 0 32 32">
                <rect x="2" y="2" width="28" height="28" rx="3" fill="#909090" stroke="#222" strokeWidth="3" />
                <rect x="9" y="9" width="14" height="14" fill="#111" />
              </svg>
            </Control>
          </Stack>
          <Controls>
            <ControlRow>
              {icons.map(([name, shape, dark]) => (
                <Control key={name} $dark={dark} aria-label={name}>
                  <Disc $dark={dark}><svg width="18" height="18" viewBox="0 0 18 18">{shape}</svg></Disc>
                </Control>
              ))}
            </ControlRow>
            <ControlRow>
              <Control><Disc><svg width="12" height="12" viewBox="0 0 12 12"><path d="M6 1L1.500 6 6 11M11 1L6.500 6 11 11" fill="none" stroke="#222" strokeWidth="1.500" /></svg></Disc>Back</Control>
              <Control>Next<Disc><svg width="12" height="12" viewBox="0 0 12 12"><path d="M1 1l4.500 5L1 11M6 1l4.500 5L6 11" fill="none" stroke="#222" strokeWidth="1.500" /></svg></Disc></Control>
            </ControlRow>
          </Controls>
        </BottomBar>
      </Main>
    </Frame>
  </Page>
);

export default App;
